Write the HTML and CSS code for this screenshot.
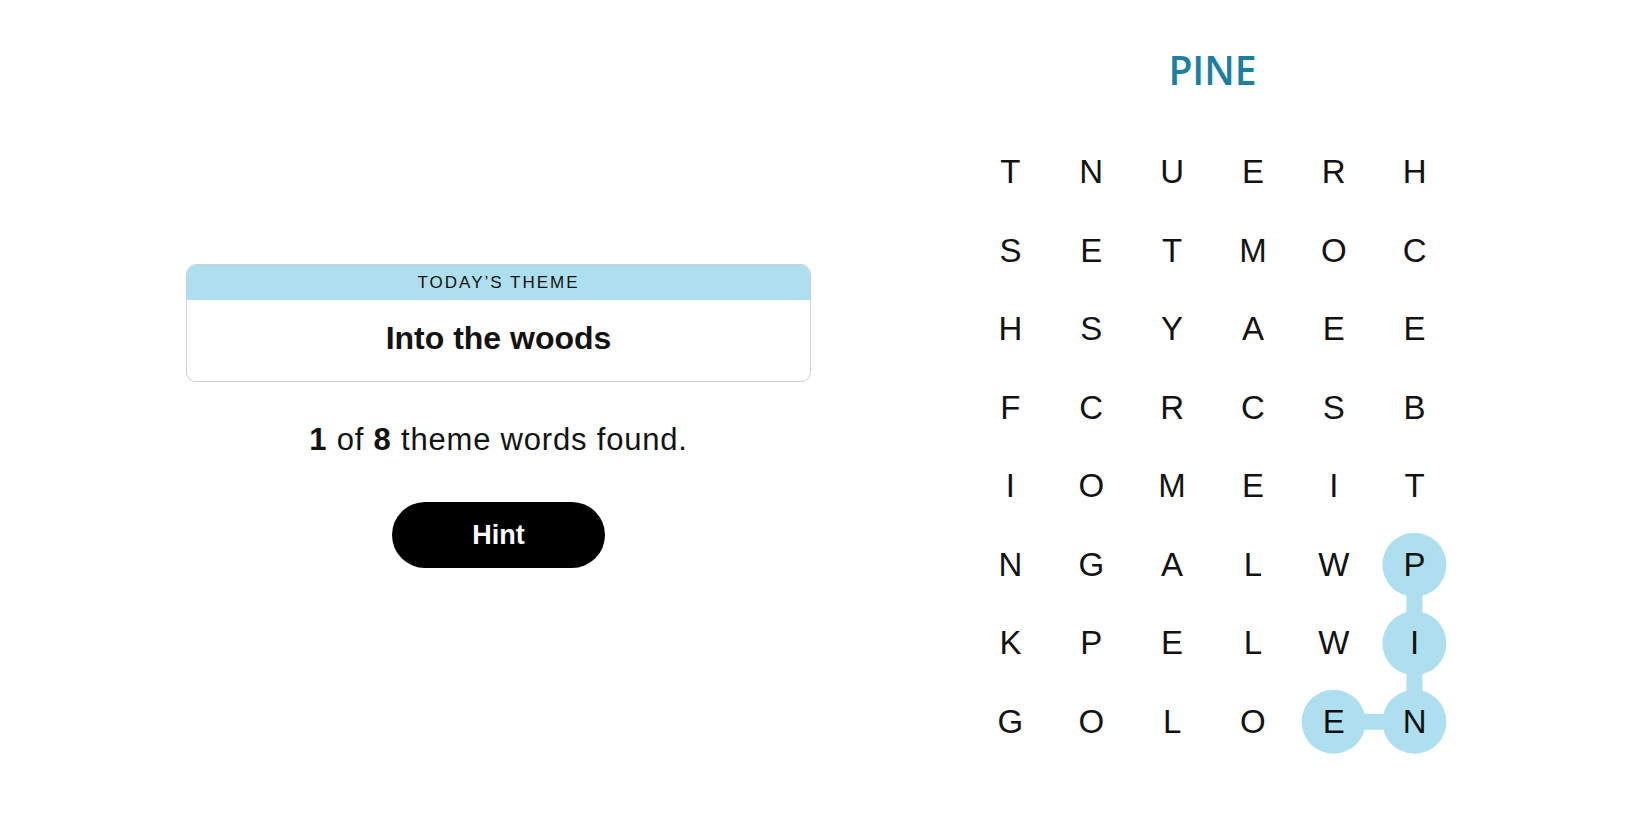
FILE: index.html
```html
<!DOCTYPE html>
<html lang="en">
<head>
<meta charset="utf-8">
<title>Strands</title>
<link rel="stylesheet" href="styles.css">
</head>
<body>
<main class="game">
  <section class="info">
    <div class="theme-card">
      <div class="theme-label">TODAY’S THEME</div>
      <div class="theme-title">Into the woods</div>
    </div>
    <p class="progress"><b>1</b> of <b>8</b> theme words found.</p>
    <button class="hint">Hint</button>
  </section>
  <section class="board">
    <h1 class="current-word">PINE</h1>
    <div class="grid">
      <svg class="path" width="485" height="628" viewBox="0 0 485 628">
        <g stroke="#aedfee" stroke-width="16">
          <line x1="444.4" y1="431.75" x2="444.4" y2="588.75"/>
          <line x1="363.6" y1="588.75" x2="444.4" y2="588.75"/>
        </g>
        <g fill="#aedfee">
          <circle cx="444.4" cy="431.75" r="32"/>
          <circle cx="444.4" cy="510.25" r="32"/>
          <circle cx="444.4" cy="588.75" r="32"/>
          <circle cx="363.6" cy="588.75" r="32"/>
        </g>
      </svg>
      <span>T</span><span>N</span><span>U</span><span>E</span><span>R</span><span>H</span>
      <span>S</span><span>E</span><span>T</span><span>M</span><span>O</span><span>C</span>
      <span>H</span><span>S</span><span>Y</span><span>A</span><span>E</span><span>E</span>
      <span>F</span><span>C</span><span>R</span><span>C</span><span>S</span><span>B</span>
      <span>I</span><span>O</span><span>M</span><span>E</span><span>I</span><span>T</span>
      <span>N</span><span>G</span><span>A</span><span>L</span><span>W</span><span>P</span>
      <span>K</span><span>P</span><span>E</span><span>L</span><span>W</span><span>I</span>
      <span>G</span><span>O</span><span>L</span><span>O</span><span>E</span><span>N</span>
    </div>
  </section>
</main>
</body>
</html>
```
FILE: styles.css
```css
* { box-sizing: border-box; }
html, body {
  margin: 0;
  padding: 0;
  background: #ffffff;
  color: #121212;
  font-family: "Liberation Sans", Arial, sans-serif;
}
.game {
  display: flex;
  align-items: flex-start;
  padding-left: 186px;
  gap: 159px;
  width: 1650px;
  height: 825px;
}
.info {
  width: 625px;
  padding-top: 264px;
  display: flex;
  flex-direction: column;
  align-items: center;
}
.theme-card {
  width: 100%;
  border: 1px solid #cfcfcf;
  border-radius: 10px;
  overflow: hidden;
}
.theme-label {
  background: #aedfee;
  height: 35px;
  display: flex;
  align-items: center;
  justify-content: center;
  font-size: 17px;
  letter-spacing: 2px;
  color: #121212;
}
.theme-title {
  height: 81px;
  display: flex;
  align-items: center;
  justify-content: center;
  font-size: 32px;
  font-weight: 700;
  padding-bottom: 4px;
}
.progress {
  margin: 40px 0 0;
  font-size: 31px;
  letter-spacing: 0.8px;
  line-height: 36px;
  color: #121212;
}
.progress b { font-weight: 700; }
.hint {
  margin-top: 44px;
  width: 213px;
  height: 66px;
  border: none;
  border-radius: 33px;
  background: #000000;
  color: #ffffff;
  font-family: "Liberation Sans", Arial, sans-serif;
  font-size: 27px;
  font-weight: 700;
  padding: 0;
}
.board {
  width: 485px;
  display: flex;
  flex-direction: column;
  align-items: center;
}
.current-word {
  margin: 48px 0 0;
  height: 44px;
  line-height: 44px;
  font-family: "Open Sans", "Liberation Sans", sans-serif;
  font-size: 39px;
  font-weight: 600;
  color: #1b7fa3;
}
.grid {
  position: relative;
  margin-top: 41px;
  width: 485px;
  height: 628px;
  display: grid;
  grid-template-columns: repeat(6, 1fr);
  grid-template-rows: repeat(8, 1fr);
}
.path {
  position: absolute;
  left: 0;
  top: 0;
  z-index: 0;
}
.grid span {
  position: relative;
  z-index: 1;
  display: flex;
  align-items: center;
  justify-content: center;
  font-size: 33px;
  color: #121212;
}
```
